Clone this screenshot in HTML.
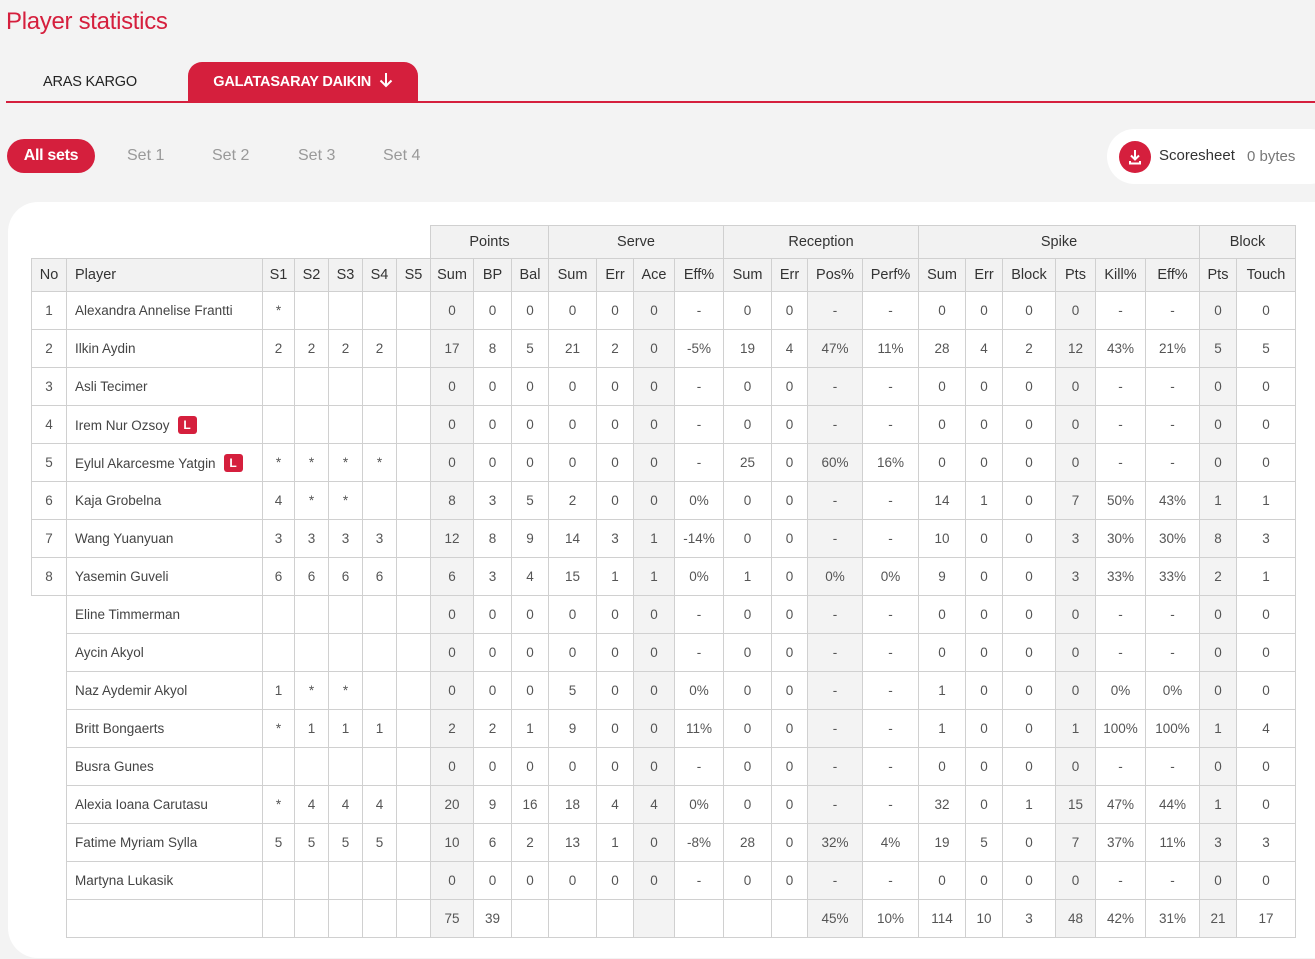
<!DOCTYPE html>
<html><head><meta charset="utf-8">
<style>
body{margin:0;width:1315px;height:959px;background:#f3f3f3;font-family:"Liberation Sans",sans-serif;position:relative;overflow:hidden}
.title{position:absolute;left:6px;top:8px;font-size:24px;color:#d51f3d;letter-spacing:-0.3px}
.line{position:absolute;left:6px;top:101px;width:1309px;height:2px;background:#d51f3d}
.tab1{position:absolute;left:20px;top:62px;width:140px;height:40px;line-height:40px;text-align:center;font-size:14.5px;color:#222;letter-spacing:-.2px}
.tab2{position:absolute;left:188px;top:62px;width:230px;height:41px;background:#d51f3d;border-radius:14px 14px 0 0;color:#fff;font-size:14.5px;font-weight:bold;line-height:40px;text-align:center;letter-spacing:-.2px}
.pill{position:absolute;left:7px;top:139px;width:88px;height:34px;border-radius:17px;background:#d51f3d;color:#fff;font-weight:bold;font-size:16px;line-height:34px;text-align:center;letter-spacing:-.3px}
.set{position:absolute;top:139px;line-height:34px;font-size:16px;color:#999}
.sheet{position:absolute;left:1107px;top:129px;width:230px;height:55px;background:#fff;border-radius:28px}
.dl{position:absolute;left:12px;top:12px;width:32px;height:32px;border-radius:50%;background:#d51f3d}
.card{position:absolute;left:8px;top:202px;width:1340px;height:756px;background:#fff;border-radius:30px}
table{position:absolute;left:31px;top:225px;border-collapse:collapse;table-layout:fixed;font-size:13.5px;color:#555}
td,th{border:1px solid #d0d0d0;text-align:center;padding:0;height:37px;font-weight:normal;white-space:nowrap;overflow:hidden}
th{background:#f2f2f2;color:#333;font-size:14.5px;height:32px}
tr.g th{height:32px}
tr.g th.e{background:none;border:none}
td.p{text-align:left;padding-left:8px;color:#444}
.s td:nth-child(8),.s td:nth-child(13),.s td:nth-child(17),.s td:nth-child(22),.s td:nth-child(25){background:#f3f3f3}
td.n{border:none}
.L{display:inline-block;width:19px;height:18px;background:#d51f3d;color:#fff;border-radius:3px;font-size:12px;font-weight:bold;line-height:18px;text-align:center;margin-left:8px;vertical-align:1px}
</style></head><body>
<div class="title">Player statistics</div>
<div class="tab1">ARAS KARGO</div>
<div class="tab2">GALATASARAY DAIKIN &nbsp;<svg width="14" height="16" viewBox="0 0 14 16" style="vertical-align:-2px"><path d="M7 1v13M1.5 8.5L7 14l5.5-5.5" stroke="#fff" stroke-width="2" fill="none"/></svg></div>
<div class="line"></div>
<div class="pill">All sets</div>
<div class="set" style="left:127px">Set 1</div>
<div class="set" style="left:212px">Set 2</div>
<div class="set" style="left:298px">Set 3</div>
<div class="set" style="left:383px">Set 4</div>
<div class="sheet"><div class="dl"><svg width="32" height="32" viewBox="0 0 32 32"><path d="M16 9v9M12 14.5l4 4 4-4M11 20v2.5h10V20" stroke="#fff" stroke-width="2" fill="none"/></svg></div>
<span style="position:absolute;left:52px;top:18px;font-size:15px;color:#333">Scoresheet</span>
<span style="position:absolute;left:140px;top:19px;font-size:15px;color:#777">0 bytes</span></div>
<div class="card"></div>
<table>
<colgroup><col style="width:35px"><col style="width:196px"><col style="width:32px"><col style="width:34px"><col style="width:34px"><col style="width:34px"><col style="width:34px"><col style="width:43px"><col style="width:38px"><col style="width:37px"><col style="width:48px"><col style="width:37px"><col style="width:41px"><col style="width:49px"><col style="width:48px"><col style="width:36px"><col style="width:55px"><col style="width:56px"><col style="width:47px"><col style="width:37px"><col style="width:53px"><col style="width:40px"><col style="width:50px"><col style="width:54px"><col style="width:37px"><col style="width:59px"></colgroup>
<tr class="g"><th class="e" colspan="7"></th><th colspan="3">Points</th><th colspan="4">Serve</th><th colspan="4">Reception</th><th colspan="6">Spike</th><th colspan="2">Block</th></tr>
<tr><th>No</th><th style="text-align:left;padding-left:8px">Player</th><th>S1</th><th>S2</th><th>S3</th><th>S4</th><th>S5</th><th>Sum</th><th>BP</th><th>Bal</th><th>Sum</th><th>Err</th><th>Ace</th><th>Eff%</th><th>Sum</th><th>Err</th><th>Pos%</th><th>Perf%</th><th>Sum</th><th>Err</th><th>Block</th><th>Pts</th><th>Kill%</th><th>Eff%</th><th>Pts</th><th>Touch</th></tr>
<tbody class="s">
<tr><td>1</td><td class="p">Alexandra Annelise Frantti</td><td>*</td><td></td><td></td><td></td><td></td><td>0</td><td>0</td><td>0</td><td>0</td><td>0</td><td>0</td><td>-</td><td>0</td><td>0</td><td>-</td><td>-</td><td>0</td><td>0</td><td>0</td><td>0</td><td>-</td><td>-</td><td>0</td><td>0</td></tr>
<tr><td>2</td><td class="p">Ilkin Aydin</td><td>2</td><td>2</td><td>2</td><td>2</td><td></td><td>17</td><td>8</td><td>5</td><td>21</td><td>2</td><td>0</td><td>-5%</td><td>19</td><td>4</td><td>47%</td><td>11%</td><td>28</td><td>4</td><td>2</td><td>12</td><td>43%</td><td>21%</td><td>5</td><td>5</td></tr>
<tr><td>3</td><td class="p">Asli Tecimer</td><td></td><td></td><td></td><td></td><td></td><td>0</td><td>0</td><td>0</td><td>0</td><td>0</td><td>0</td><td>-</td><td>0</td><td>0</td><td>-</td><td>-</td><td>0</td><td>0</td><td>0</td><td>0</td><td>-</td><td>-</td><td>0</td><td>0</td></tr>
<tr><td>4</td><td class="p">Irem Nur Ozsoy<span class="L">L</span></td><td></td><td></td><td></td><td></td><td></td><td>0</td><td>0</td><td>0</td><td>0</td><td>0</td><td>0</td><td>-</td><td>0</td><td>0</td><td>-</td><td>-</td><td>0</td><td>0</td><td>0</td><td>0</td><td>-</td><td>-</td><td>0</td><td>0</td></tr>
<tr><td>5</td><td class="p">Eylul Akarcesme Yatgin<span class="L">L</span></td><td>*</td><td>*</td><td>*</td><td>*</td><td></td><td>0</td><td>0</td><td>0</td><td>0</td><td>0</td><td>0</td><td>-</td><td>25</td><td>0</td><td>60%</td><td>16%</td><td>0</td><td>0</td><td>0</td><td>0</td><td>-</td><td>-</td><td>0</td><td>0</td></tr>
<tr><td>6</td><td class="p">Kaja Grobelna</td><td>4</td><td>*</td><td>*</td><td></td><td></td><td>8</td><td>3</td><td>5</td><td>2</td><td>0</td><td>0</td><td>0%</td><td>0</td><td>0</td><td>-</td><td>-</td><td>14</td><td>1</td><td>0</td><td>7</td><td>50%</td><td>43%</td><td>1</td><td>1</td></tr>
<tr><td>7</td><td class="p">Wang Yuanyuan</td><td>3</td><td>3</td><td>3</td><td>3</td><td></td><td>12</td><td>8</td><td>9</td><td>14</td><td>3</td><td>1</td><td>-14%</td><td>0</td><td>0</td><td>-</td><td>-</td><td>10</td><td>0</td><td>0</td><td>3</td><td>30%</td><td>30%</td><td>8</td><td>3</td></tr>
<tr><td>8</td><td class="p">Yasemin Guveli</td><td>6</td><td>6</td><td>6</td><td>6</td><td></td><td>6</td><td>3</td><td>4</td><td>15</td><td>1</td><td>1</td><td>0%</td><td>1</td><td>0</td><td>0%</td><td>0%</td><td>9</td><td>0</td><td>0</td><td>3</td><td>33%</td><td>33%</td><td>2</td><td>1</td></tr>
<tr><td class="n"></td><td class="p">Eline Timmerman</td><td></td><td></td><td></td><td></td><td></td><td>0</td><td>0</td><td>0</td><td>0</td><td>0</td><td>0</td><td>-</td><td>0</td><td>0</td><td>-</td><td>-</td><td>0</td><td>0</td><td>0</td><td>0</td><td>-</td><td>-</td><td>0</td><td>0</td></tr>
<tr><td class="n"></td><td class="p">Aycin Akyol</td><td></td><td></td><td></td><td></td><td></td><td>0</td><td>0</td><td>0</td><td>0</td><td>0</td><td>0</td><td>-</td><td>0</td><td>0</td><td>-</td><td>-</td><td>0</td><td>0</td><td>0</td><td>0</td><td>-</td><td>-</td><td>0</td><td>0</td></tr>
<tr><td class="n"></td><td class="p">Naz Aydemir Akyol</td><td>1</td><td>*</td><td>*</td><td></td><td></td><td>0</td><td>0</td><td>0</td><td>5</td><td>0</td><td>0</td><td>0%</td><td>0</td><td>0</td><td>-</td><td>-</td><td>1</td><td>0</td><td>0</td><td>0</td><td>0%</td><td>0%</td><td>0</td><td>0</td></tr>
<tr><td class="n"></td><td class="p">Britt Bongaerts</td><td>*</td><td>1</td><td>1</td><td>1</td><td></td><td>2</td><td>2</td><td>1</td><td>9</td><td>0</td><td>0</td><td>11%</td><td>0</td><td>0</td><td>-</td><td>-</td><td>1</td><td>0</td><td>0</td><td>1</td><td>100%</td><td>100%</td><td>1</td><td>4</td></tr>
<tr><td class="n"></td><td class="p">Busra Gunes</td><td></td><td></td><td></td><td></td><td></td><td>0</td><td>0</td><td>0</td><td>0</td><td>0</td><td>0</td><td>-</td><td>0</td><td>0</td><td>-</td><td>-</td><td>0</td><td>0</td><td>0</td><td>0</td><td>-</td><td>-</td><td>0</td><td>0</td></tr>
<tr><td class="n"></td><td class="p">Alexia Ioana Carutasu</td><td>*</td><td>4</td><td>4</td><td>4</td><td></td><td>20</td><td>9</td><td>16</td><td>18</td><td>4</td><td>4</td><td>0%</td><td>0</td><td>0</td><td>-</td><td>-</td><td>32</td><td>0</td><td>1</td><td>15</td><td>47%</td><td>44%</td><td>1</td><td>0</td></tr>
<tr><td class="n"></td><td class="p">Fatime Myriam Sylla</td><td>5</td><td>5</td><td>5</td><td>5</td><td></td><td>10</td><td>6</td><td>2</td><td>13</td><td>1</td><td>0</td><td>-8%</td><td>28</td><td>0</td><td>32%</td><td>4%</td><td>19</td><td>5</td><td>0</td><td>7</td><td>37%</td><td>11%</td><td>3</td><td>3</td></tr>
<tr><td class="n"></td><td class="p">Martyna Lukasik</td><td></td><td></td><td></td><td></td><td></td><td>0</td><td>0</td><td>0</td><td>0</td><td>0</td><td>0</td><td>-</td><td>0</td><td>0</td><td>-</td><td>-</td><td>0</td><td>0</td><td>0</td><td>0</td><td>-</td><td>-</td><td>0</td><td>0</td></tr>
<tr><td class="n"></td><td class="p"></td><td></td><td></td><td></td><td></td><td></td><td>75</td><td>39</td><td></td><td></td><td></td><td></td><td></td><td></td><td></td><td>45%</td><td>10%</td><td>114</td><td>10</td><td>3</td><td>48</td><td>42%</td><td>31%</td><td>21</td><td>17</td></tr>
</tbody>
</table>
</body></html>
